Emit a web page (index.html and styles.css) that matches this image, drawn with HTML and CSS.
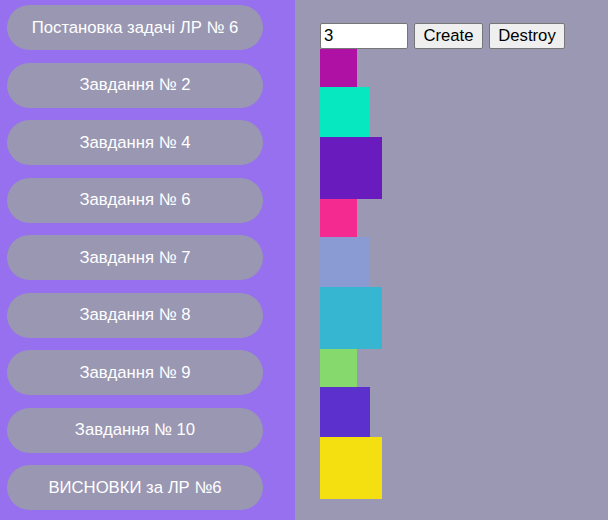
FILE: index.html
```html
<!DOCTYPE html>
<html lang="uk">
<head>
<meta charset="utf-8">
<title>ЛР 6</title>
<link rel="stylesheet" href="styles.css">
</head>
<body>
<div class="layout">
  <nav class="sidebar">
    <a class="nav-btn" href="#">Постановка задачі ЛР № 6</a>
    <a class="nav-btn" href="#">Завдання № 2</a>
    <a class="nav-btn" href="#">Завдання № 4</a>
    <a class="nav-btn" href="#">Завдання № 6</a>
    <a class="nav-btn" href="#">Завдання № 7</a>
    <a class="nav-btn" href="#">Завдання № 8</a>
    <a class="nav-btn" href="#">Завдання № 9</a>
    <a class="nav-btn" href="#">Завдання № 10</a>
    <a class="nav-btn" href="#">ВИСНОВКИ за ЛР №6</a>
  </nav>
  <main class="content">
    <div class="controls">
      <input class="amount" type="text" value="3">
      <button class="btn btn-create">Create</button>
      <button class="btn btn-destroy">Destroy</button>
    </div>
    <div class="boxes">
      <div class="box s1 c1"></div>
      <div class="box s2 c2"></div>
      <div class="box s3 c3"></div>
      <div class="box s1 c4"></div>
      <div class="box s2 c5"></div>
      <div class="box s3 c6"></div>
      <div class="box s1 c7"></div>
      <div class="box s2 c8"></div>
      <div class="box s3 c9"></div>
    </div>
  </main>
</div>
</body>
</html>
```
FILE: styles.css
```css
* { box-sizing: border-box; }
html, body { margin: 0; padding: 0; height: 100%; }
body {
  font-family: "Liberation Sans", Arial, sans-serif;
  font-size: 16px;
  overflow: hidden;
}
.layout {
  display: flex;
  height: 520px;
}
.sidebar {
  width: 295px;
  flex: none;
  background: #9670ee;
  padding: 5px 32px 0 7px;
  display: flex;
  flex-direction: column;
  gap: 12.5px;
}
.nav-btn {
  display: flex;
  align-items: center;
  justify-content: center;
  height: 45px;
  border-radius: 22.5px;
  background: #9a97b3;
  color: #fff;
  text-decoration: none;
  font-size: 16.7px;
}
.content {
  flex: 1;
  background: #9b98b4;
  padding: 23px 0 0 25px;
}
.controls {
  display: flex;
  align-items: center;
  gap: 6px;
  height: 26.3px;
}
.amount {
  width: 88px;
  height: 26px;
  font-family: "Liberation Sans", Arial, sans-serif;
  font-size: 16.7px;
  padding: 1px 3px;
  border: 1px solid #767676;
  border-radius: 2px;
  background: #fff;
  color: #000;
}
.btn {
  height: 26px;
  font-family: "Liberation Sans", Arial, sans-serif;
  font-size: 16.7px;
  padding: 1px 4px;
  border: 1px solid #767676;
  border-radius: 2px;
  background: #efefef;
  color: #000;
}
.btn-create { width: 69px; }
.btn-destroy { width: 76px; }
.boxes { display: flex; flex-direction: column; align-items: flex-start; }
.box { flex: none; }
.s1 { width: 37px; height: 37.5px; }
.s2 { width: 50px; height: 50px; }
.s3 { width: 62px; height: 62.5px; }
.c1 { background: #ae11a4; }
.c2 { background: #06e8c0; }
.c3 { background: #6a1bbd; }
.c4 { background: #f52a91; }
.c5 { background: #8a9bd4; }
.c6 { background: #36b6d0; }
.c7 { background: #86d96c; }
.c8 { background: #5b30cc; }
.c9 { background: #f4e010; }
```
